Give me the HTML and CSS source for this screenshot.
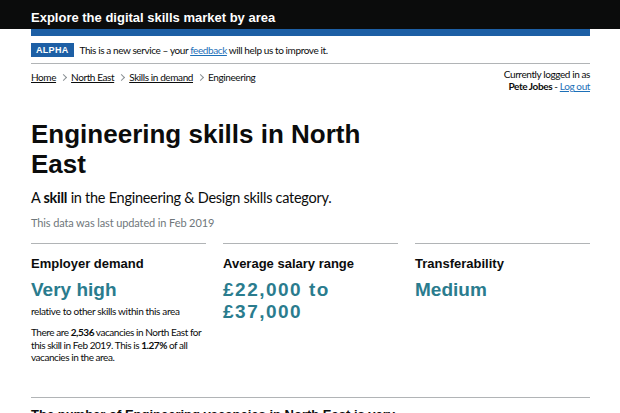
FILE: index.html
```html
<!DOCTYPE html>
<html lang="en">
<head>
    <meta charset="UTF-8">
    <meta name="viewport" content="width=device-width, initial-scale=1.0">
    <title>Engineering skills in North East</title>
    <link rel="stylesheet" href="styles.css">
</head>
<body>
    <header class="site-header">
        <div class="site-header__inner">
            <a href="#" class="site-header__title">Explore the digital skills market by area</a>
        </div>
    </header>

    <div class="container">
        <div class="header-bar"></div>

        <div class="phase-banner">
            <strong class="phase-tag">alpha</strong>
            <span>This is a new service – your <a href="#">feedback</a> will help us to improve it.</span>
        </div>

        <div class="top-row">
            <ol class="breadcrumbs">
                <li><a href="#">Home</a></li>
                <li><a href="#">North East</a></li>
                <li><a href="#">Skills in demand</a></li>
                <li>Engineering</li>
            </ol>
            <div class="user-status">
                Currently logged in as<br>
                <strong>Pete Jobes</strong> - <a href="#">Log out</a>
            </div>
        </div>

        <main>
            <div class="two-thirds">
                <h1>Engineering skills in North East</h1>
                <p class="lead">A <strong>skill</strong> in the Engineering &amp; Design skills category.</p>
                <p class="updated">This data was last updated in Feb 2019</p>
            </div>

            <div class="stats">
                <section class="stat">
                    <h3>Employer demand</h3>
                    <p class="stat-value">Very high</p>
                    <p class="stat-note">relative to other skills within this area</p>
                    <p class="stat-text">There are <strong>2,536</strong> vacancies in North East for this skill in Feb 2019. This is <strong>1.27%</strong> of all vacancies in the area.</p>
                </section>
                <section class="stat">
                    <h3>Average salary range</h3>
                    <p class="stat-value stat-value--money">£22,000 to £37,000</p>
                </section>
                <section class="stat">
                    <h3>Transferability</h3>
                    <p class="stat-value">Medium</p>
                </section>
            </div>

            <div class="section">
                <h2>The number of Engineering vacancies in North East is very high compared to other areas</h2>
            </div>
        </main>
    </div>
</body>
</html>
```

FILE: styles.css
```css
body {
    margin: 0;
    font-family: Lato, "Liberation Sans", Arial, sans-serif;
    letter-spacing: -0.4px;
    color: #0b0c0c;
    background: #fff;
}

a {
    color: #1d70b8;
}

.site-header {
    background-color: #0b0c0c;
    height: 29px;
}

.site-header__inner {
    margin: 0 30px 0 31px;
    padding-top: 2px;
    line-height: 27px;
}

.site-header__title {
    font-family: "Liberation Sans", Arial, sans-serif;
    font-weight: bold;
    font-size: 13px;
    letter-spacing: 0;
    color: #fff;
    text-decoration: none;
}

.container {
    margin: 0 30px 0 31px;
}

.header-bar {
    height: 7px;
    background-color: #1d5fa5;
}

.phase-banner {
    display: flex;
    align-items: center;
    padding: 7px 0 6px;
    border-bottom: 1px solid #b1b4b6;
    font-size: 10px;
}

.phase-tag {
    font-family: "Liberation Sans", Arial, sans-serif;
    font-size: 9px;
    letter-spacing: 0.3px;
    text-transform: uppercase;
    line-height: 14px;
    padding: 0 5px;
    margin-right: 6px;
    color: #fff;
    background-color: #1d5fa5;
}

.top-row {
    display: flex;
    justify-content: space-between;
    align-items: flex-start;
    margin-top: 4px;
    font-size: 10px;
}

.breadcrumbs {
    display: flex;
    list-style: none;
    margin: 0;
    padding: 3px 0 0;
    line-height: 12px;
}

.breadcrumbs li {
    position: relative;
}

.breadcrumbs li + li {
    margin-left: 6px;
    padding-left: 9px;
}

/* chevron between crumbs */
.breadcrumbs li + li::before {
    content: "";
    position: absolute;
    left: -1px;
    top: 4px;
    width: 4px;
    height: 4px;
    border-top: 1px solid #8a9094;
    border-right: 1px solid #8a9094;
    transform: rotate(45deg);
}

.breadcrumbs a {
    color: #0b0c0c;
}

.user-status {
    text-align: right;
    line-height: 12px;
}

.two-thirds {
    max-width: 373px;
}

h1 {
    font-family: "Liberation Sans", Arial, sans-serif;
    font-size: 26px;
    line-height: 30px;
    letter-spacing: 0;
    margin: 27px 0 9px;
}

.lead {
    font-size: 14.5px;
    line-height: 20px;
    letter-spacing: -0.27px;
    margin: 0 0 7px;
}

.updated {
    font-size: 11px;
    line-height: 16px;
    letter-spacing: -0.12px;
    color: #6f777b;
    margin: 0 0 12px;
}

.stats {
    display: grid;
    grid-template-columns: repeat(3, 1fr);
    column-gap: 17px;
}

.stat {
    border-top: 1px solid #b1b4b6;
    padding-top: 12px;
}

.stat h3,
.section h2 {
    font-family: "Liberation Sans", Arial, sans-serif;
    font-size: 13px;
    line-height: 16px;
    letter-spacing: 0;
    margin: 0;
}

.stat-value {
    font-family: "Liberation Sans", Arial, sans-serif;
    font-weight: bold;
    font-size: 19px;
    line-height: 22px;
    letter-spacing: 0;
    color: #2a7c8e;
    margin: 7px 0 0;
}

.stat-value--money {
    letter-spacing: 1.5px;
}

.stat-note {
    font-size: 10px;
    line-height: 12px;
    letter-spacing: -0.35px;
    margin: 4px 0 0;
}

.stat-text {
    font-size: 10px;
    line-height: 12.5px;
    letter-spacing: -0.45px;
    margin: 9px 0 0;
}

.section {
    margin-top: 33px;
    padding-top: 9px;
    border-top: 1px solid #b1b4b6;
}

.section h2 {
    max-width: 373px;
}
```
